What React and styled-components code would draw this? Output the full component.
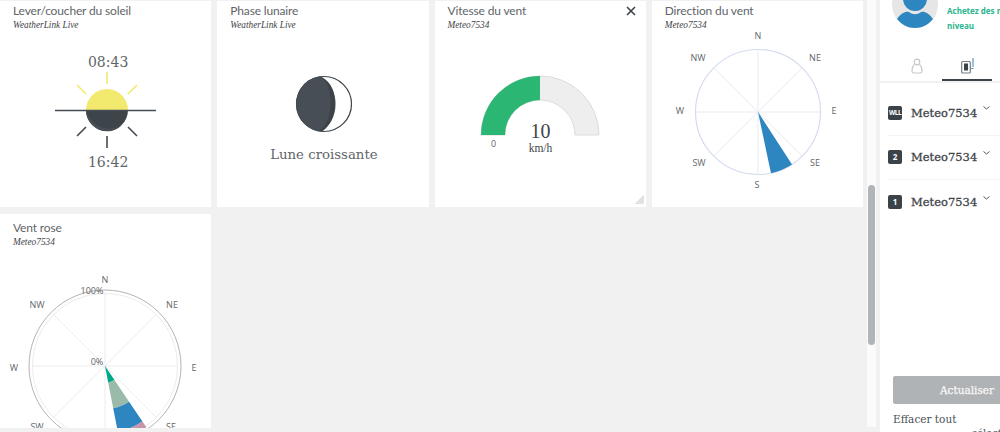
import React from "react";
import styled, { createGlobalStyle } from "styled-components";

const GlobalStyle = createGlobalStyle`
  html, body {
    margin: 0;
    height: 100%;
    overflow: hidden;
    background: #f1f1f1;
  }
`;

const polar = (cx, cy, r, deg) => {
  const a = ((deg - 90) * Math.PI) / 180;
  return [cx + r * Math.cos(a), cy + r * Math.sin(a)];
};

const ring = (cx, cy, r0, r1, from, to) => {
  const [a, b] = polar(cx, cy, r0, from);
  const [c, d] = polar(cx, cy, r1, from);
  const [e, f] = polar(cx, cy, r1, to);
  const [g, h] = polar(cx, cy, r0, to);
  return `M${a} ${b}L${c} ${d}A${r1} ${r1} 0 0 1 ${e} ${f}L${g} ${h}A${r0} ${r0} 0 0 0 ${a} ${b}Z`;
};

const COMPASS = ["N", "NE", "E", "SE", "S", "SW", "W", "NW"];

function SunIcon() {
  return (
    <svg width="110" height="78" viewBox="0 0 110 78">
      <path d="M33 39a21 21 0 0 1 42 0Z" fill="#f2ea6e" />
      <path d="M33 39a21 21 0 0 0 42 0Z" fill="#3d444a" />
      <path d="M33 39a21 21 0 0 0 36 15a24 24 0 0 1 -36 -15Z" fill="#474e55" />
      <path d="M2 39.5H103" stroke="#454c53" strokeWidth="1.6" />
      <path d="M54 1V13M24 14l9 9M84 14l-9 9" stroke="#f2ea6e" strokeWidth="1.6" />
      <path d="M54 65V77M24 65l9 -9M84 65l-9 -9" stroke="#454c53" strokeWidth="1.6" />
    </svg>
  );
}

function MoonIcon() {
  return (
    <svg width="60" height="60" viewBox="0 0 60 60">
      <circle cx="30" cy="30" r="27.5" fill="#fff" stroke="#3c4349" strokeWidth="1.2" />
      <path d="M27 2.4C38 8 41.5 20 41.5 30C41.5 42 36 52 28 57.5C13 56.5 2.4 44 2.4 30C2.4 15 13 3.5 27 2.4Z" fill="#3c4349" />
      <path d="M27 2.4C35 9 36.5 20 36.5 30C36.5 42 32 52 25 57C12 55 2.4 44 2.4 30C2.4 15 13 3.5 27 2.4Z" fill="#474e55" />
    </svg>
  );
}

function Gauge() {
  return (
    <svg width="211" height="100" viewBox="0 0 211 100">
      <path d="M46 74A59 59 0 0 1 164 74H140A35 35 0 0 0 70 74Z" fill="#eeeeee" stroke="#dcdcdc" strokeWidth="1" />
      <path d="M46 74A59 59 0 0 1 105 15V39A35 35 0 0 0 70 74Z" fill="#2bb673" />
      <SvgNumber x="105.5" y="77">10</SvgNumber>
      <SvgUnit x="105.5" y="91">km/h</SvgUnit>
      <SvgLabel x="58.5" y="86">0</SvgLabel>
    </svg>
  );
}

function WindDirection() {
  const cx = 106;
  const cy = 82;
  const r = 62.5;
  const labels = { N: [106, 9], NE: [163, 31], E: [182, 84], SE: [163, 136], S: [105, 158], SW: [47, 136], W: [28, 84], NW: [46, 31] };
  return (
    <svg width="211" height="170" viewBox="0 0 211 170">
      {COMPASS.map((d, i) => {
        const [x, y] = polar(cx, cy, r, i * 45);
        return <line key={d} x1={cx} y1={cy} x2={x} y2={y} stroke="#e8ebf2" strokeWidth="1" />;
      })}
      <circle cx={cx} cy={cy} r={r} fill="none" stroke="#d5dcef" strokeWidth="1.2" />
      <path d={ring(cx, cy, 0, r, 147, 168)} fill="#2e86c1" />
      {COMPASS.map((d) => (
        <SvgLabel key={d} x={labels[d][0]} y={labels[d][1]}>{d}</SvgLabel>
      ))}
    </svg>
  );
}

function WindRose() {
  const cx = 105;
  const cy = 100;
  const r = 76;
  const labels = { N: [105, 17], NE: [172, 42], E: [194, 105], SE: [171, 164], SW: [37, 164], W: [14, 105], NW: [37, 42] };
  return (
    <svg width="211" height="190" viewBox="0 0 211 190">
      {COMPASS.map((d, i) => {
        const [x, y] = polar(cx, cy, 73, i * 45);
        return <line key={d} x1={cx} y1={cy} x2={x} y2={y} stroke="#ececec" strokeWidth="1" />;
      })}
      <circle cx={cx} cy={cy} r={72.5} fill="none" stroke="#ececec" strokeWidth="1" />
      <circle cx={cx} cy={cy} r={r} fill="none" stroke="#b4b4b4" strokeWidth="1" />
      <path d={ring(cx, cy, 0, 17, 146, 169)} fill="#00a88a" />
      <path d={ring(cx, cy, 17, 43, 146, 169)} fill="#9abbaa" />
      <path d={ring(cx, cy, 43, 67, 146, 169)} fill="#2e86c1" />
      <path d={ring(cx, cy, 67, 74, 146, 169)} fill="#c993ab" />
      {Object.keys(labels).map((d) => (
        <SvgLabel key={d} x={labels[d][0]} y={labels[d][1]}>{d}</SvgLabel>
      ))}
      <SvgLabel x="92" y="28">100%</SvgLabel>
      <SvgLabel x="97" y="99">0%</SvgLabel>
    </svg>
  );
}

function Avatar() {
  return (
    <svg width="46" height="28" viewBox="0 0 46 28">
      <circle cx="23" cy="5" r="23" fill="#e6e6e6" />
      <circle cx="23" cy="-1" r="12" fill="#2e86c1" />
      <path d="M5 19C9 13 14 11 17 12C21 15 25 15 29 12C32 11 37 13 41 19C36 25 30 28 23 28C16 28 10 25 5 19Z" fill="#2e86c1" />
    </svg>
  );
}

function PersonIcon() {
  return (
    <svg width="12" height="16" viewBox="0 0 12 16" fill="none" stroke="#c4c7c9" strokeWidth="1.2">
      <circle cx="6" cy="4" r="2.8" />
      <path d="M3.6 6.5C1.5 8 1 10.5 1 13.5C1 14.5 2 15 3 15H9C10 15 11 14.5 11 13.5C11 10.5 10.5 8 8.4 6.5" />
    </svg>
  );
}

function DeviceIcon() {
  return (
    <svg width="13" height="16" viewBox="0 0 13 16">
      <rect x="0.7" y="3.5" width="8.6" height="11.5" rx="1" fill="#fff" stroke="#777c80" strokeWidth="1.2" />
      <rect x="3" y="5.5" width="4" height="7" fill="#3b4248" />
      <path d="M12 0V9" stroke="#5c94c0" strokeWidth="1.2" />
      <path d="M10 10.5H12.5" stroke="#5c94c0" strokeWidth="1" />
    </svg>
  );
}

const stations = [
  { badge: "WLL", small: true },
  { badge: "2" },
  { badge: "1" },
];

export default function App() {
  return (
    <>
      <GlobalStyle />
      <Page>
        <Dashboard>
          <Card>
            <Title>Lever/coucher du soleil</Title>
            <Source>WeatherLink Live</Source>
            <SunBody>
              <Time>08:43</Time>
              <SunIcon />
              <Time $below>16:42</Time>
            </SunBody>
          </Card>
          <Card>
            <Title>Phase lunaire</Title>
            <Source>WeatherLink Live</Source>
            <MoonBody>
              <MoonIcon />
              <MoonName>Lune croissante</MoonName>
            </MoonBody>
          </Card>
          <Card>
            <Title>Vitesse du vent</Title>
            <Source>Meteo7534</Source>
            <CloseButton>
              <svg width="10" height="10" viewBox="0 0 10 10">
                <path d="M1 1L9 9M9 1L1 9" stroke="#3b4248" strokeWidth="1.6" />
              </svg>
            </CloseButton>
            <GaugeBody>
              <Gauge />
            </GaugeBody>
            <Resizer />
          </Card>
          <Card>
            <Title>Direction du vent</Title>
            <Source>Meteo7534</Source>
            <CompassBody>
              <WindDirection />
            </CompassBody>
          </Card>
          <Card $lower>
            <Title>Vent rose</Title>
            <Source>Meteo7534</Source>
            <RoseBody>
              <WindRose />
            </RoseBody>
          </Card>
        </Dashboard>

        <ScrollTrack>
          <ScrollThumb />
        </ScrollTrack>

        <Sidebar>
          <Profile>
            <Avatar />
            <Upgrade>
              Achetez des mises à
              <br />
              niveau
            </Upgrade>
          </Profile>
          <Tabs>
            <Tab><PersonIcon /></Tab>
            <Tab $active><DeviceIcon /></Tab>
          </Tabs>
          <StationList>
            {stations.map((s) => (
              <Station key={s.badge}>
                <Badge $small={s.small}>{s.badge}</Badge>
                <StationName>Meteo7534</StationName>
                <Chevron>
                  <svg width="7" height="4" viewBox="0 0 7 4">
                    <path d="M0.5 0.5L3.5 3L6.5 0.5" fill="none" stroke="#555" strokeWidth="1" />
                  </svg>
                </Chevron>
              </Station>
            ))}
          </StationList>
          <Footer>
            <UpdateButton>Actualiser</UpdateButton>
            <ClearAll>Effacer tout</ClearAll>
            <SelectNote>sélectionner</SelectNote>
          </Footer>
        </Sidebar>
      </Page>
    </>
  );
}

const Page = styled.div`
  display: flex;
  width: 1000px;
  height: 432px;
  overflow: hidden;
  background: #f1f1f1;
`;

const Dashboard = styled.div`
  flex: none;
  width: 863px;
  height: 427px;
  padding-top: 1px;
  display: grid;
  grid-template-columns: repeat(4, 1fr);
  grid-template-rows: 206px 214px;
  gap: 7px 6px;
`;

const Card = styled.section`
  position: relative;
  background: #fff;
  padding: ${(p) => (p.$lower ? "6px" : "2px")} 13px 0;
  overflow: hidden;
  min-width: 0;
`;

const Title = styled.h3`
  margin: 0;
  font: 400 12px/16px "Lato", sans-serif;
  letter-spacing: -0.15px;
  color: #5f6569;
`;

const Source = styled.div`
  font: italic 400 9.3px/13px "Liberation Serif", serif;
  color: #3f4448;
`;

const SunBody = styled.div`
  margin: 21px -13px 0;
  padding-left: 5px;
  display: flex;
  flex-direction: column;
  align-items: center;
`;

const Time = styled.div`
  margin-top: ${(p) => (p.$below ? "4px" : "0")};
  font: 400 14px/18px "DejaVu Serif", serif;
  color: #5f6569;
`;

const MoonBody = styled.div`
  margin: 42px 0 0 2px;
  display: flex;
  flex-direction: column;
  align-items: center;
`;

const MoonName = styled.div`
  margin-top: 12px;
  font: 400 13.3px/18px "DejaVu Serif", serif;
  color: #5f6569;
  white-space: nowrap;
`;

const CloseButton = styled.div`
  position: absolute;
  top: 5px;
  right: 10px;
  line-height: 0;
`;

const GaugeBody = styled.div`
  margin: 29px -13px 0;
`;

const CompassBody = styled.div`
  margin: -2px -13px 0;
`;

const RoseBody = styled.div`
  margin: 17px -13px 0;
`;

const Resizer = styled.div`
  position: absolute;
  right: 2px;
  bottom: 3px;
  width: 10px;
  height: 10px;
  background: linear-gradient(135deg, transparent 50%, #e2e2e2 50%);
`;

const SvgLabel = styled.text`
  font: 400 9px "Open Sans", sans-serif;
  fill: #5f6569;
  text-anchor: middle;
`;

const SvgNumber = styled.text`
  font: 400 20px "Liberation Serif", serif;
  fill: #3f4448;
  text-anchor: middle;
`;

const SvgUnit = styled.text`
  font: 400 11.5px "Liberation Serif", serif;
  fill: #3f4448;
  text-anchor: middle;
`;

const ScrollTrack = styled.div`
  flex: none;
  box-sizing: border-box;
  width: 9px;
  height: 427px;
  margin: 0 4px;
  padding: 185px 1px 0;
  background: #fbfbfb;
`;

const ScrollThumb = styled.div`
  height: 160px;
  border-radius: 4px;
  background: #b2b5b7;
`;

const Sidebar = styled.aside`
  flex: none;
  width: 240px;
  height: 432px;
  display: flex;
  flex-direction: column;
  background: #fff;
`;

const Profile = styled.div`
  display: flex;
  gap: 9px;
  height: 58px;
  padding-left: 12px;
`;

const Upgrade = styled.div`
  font: 700 8px/15px "Open Sans", sans-serif;
  color: #27b48f;
  white-space: nowrap;
  padding-top: 3px;
`;

const Tabs = styled.div`
  display: flex;
  height: 23px;
  border-bottom: 2px solid #f1f1f1;
  padding-left: 12px;
`;

const Tab = styled.div`
  width: 50px;
  height: 23px;
  display: flex;
  justify-content: center;
  align-items: flex-start;
  box-sizing: border-box;
  border-bottom: 2px solid ${(p) => (p.$active ? "#3b4248" : "transparent")};
  margin-bottom: -2px;
`;

const StationList = styled.div`
  margin-top: 8px;
  padding-left: 8px;
`;

const Station = styled.div`
  display: flex;
  align-items: center;
  height: 44.5px;
  box-sizing: border-box;
  border-bottom: 1px solid #f3f3f3;
  &:last-child {
    border-bottom: none;
  }
`;

const Badge = styled.div`
  flex: none;
  width: 14px;
  height: 14px;
  border-radius: 2px;
  background: #3b4248;
  color: #fff;
  font: 700 ${(p) => (p.$small ? "6.5px" : "8px")}/14px "Open Sans", sans-serif;
  text-align: center;
  letter-spacing: ${(p) => (p.$small ? "-0.5px" : "0")};
`;

const StationName = styled.div`
  margin-left: 9px;
  font: 400 11.5px/18px "DejaVu Serif", serif;
  -webkit-text-stroke: 0.3px #3f4448;
  color: #3f4448;
`;

const Chevron = styled.div`
  margin: -10px 0 0 6px;
  line-height: 0;
`;

const Footer = styled.div`
  margin-top: auto;
  padding-left: 13px;
  position: relative;
  height: 56px;
`;

const UpdateButton = styled.div`
  width: 200px;
  height: 28px;
  border-radius: 2px;
  background: #b0b3b5;
  color: #f8f8f8;
  font: 400 10.5px/28px "DejaVu Serif", serif;
  -webkit-text-stroke: 0.25px #f8f8f8;
  padding-left: 47px;
  box-sizing: border-box;
`;

const ClearAll = styled.div`
  margin-top: 8px;
  font: 400 10.5px/14px "DejaVu Serif", serif;
  color: #4a5055;
`;

const SelectNote = styled.div`
  position: absolute;
  left: 92px;
  top: 51px;
  font: 400 10px/12px "DejaVu Serif", serif;
  color: #4a5055;
`;
